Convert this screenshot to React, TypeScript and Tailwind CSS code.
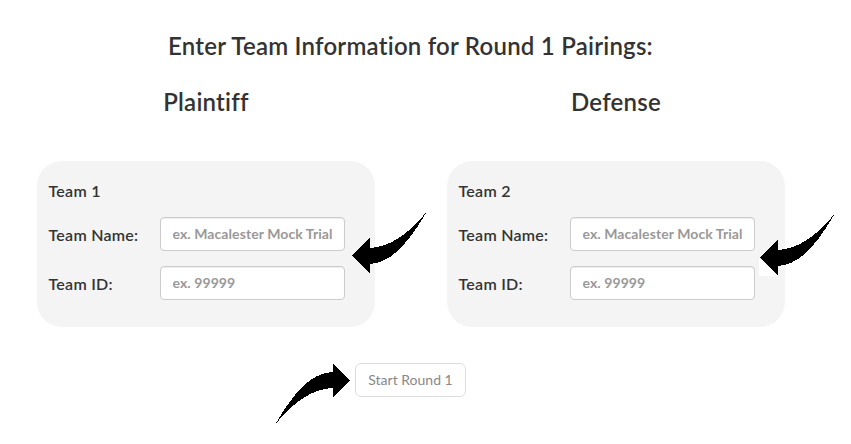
import React from "react";

const ARROW_PATH =
  "M0 43.5 L17.5 26 V36 C36 35 54 25 74.5 0 C56 32 39 51 17.5 52 V61 Z";

function Arrow({ className }: { className: string }) {
  return (
    <svg
      className={`absolute ${className}`}
      width="75"
      height="62"
      viewBox="0 0 75 62"
      shapeRendering="crispEdges"
      aria-hidden="true"
    >
      <path d={ARROW_PATH} fill="#000" />
    </svg>
  );
}

function Field({ label, placeholder }: { label: string; placeholder: string }) {
  return (
    <label className="flex h-[34px] items-center">
      <span className="w-[111.5px] shrink-0 pt-px text-[16px] leading-[22px] font-semibold tracking-[0.25px]">{label}</span>
      <input
        type="text"
        placeholder={placeholder}
        className="h-[34px] w-[185px] rounded-[4px] border border-[#ccc] bg-white pt-[5px] pr-3 pb-[7px] pl-[11.5px] text-[14px] leading-5 font-bold tracking-[0.08px] shadow-[inset_0_1px_1px_rgba(0,0,0,0.075)] placeholder:text-[#999]"
      />
    </label>
  );
}

function Team({ side, number }: { side: string; number: number }) {
  return (
    <section className="flex w-[410px] flex-col items-center">
      <h3 className="text-[24px] leading-[26px] font-semibold tracking-[0.23px]">{side}</h3>
      <div className="mt-[46px] h-[166px] w-[338px] rounded-[25px] bg-[#f4f4f4] pt-[19px] pl-[11.5px]">
        <h4 className="text-[16px] leading-[22px] font-semibold tracking-[0.25px]">Team {number}</h4>
        <div className="mt-[15px] flex flex-col gap-[15px]">
          <Field label="Team Name:" placeholder="ex. Macalester Mock Trial" />
          <Field label="Team ID:" placeholder="ex. 99999" />
        </div>
      </div>
    </section>
  );
}

export default function App() {
  return (
    <main className="relative h-[444px] w-[851px] overflow-hidden bg-white font-['Lato',sans-serif] text-[#333]">
      <div className="flex w-[821px] flex-col items-center pt-[33px]">
        <h2 className="text-[24px] leading-[26px] font-semibold tracking-[0.23px]">
          Enter Team Information for Round 1 Pairings:
        </h2>
        <div className="mt-[30px] ml-px flex w-[820px] self-start">
          <Team side="Plaintiff" number={1} />
          <Team side="Defense" number={2} />
        </div>
        <button className="mt-9 h-[34px] w-[111px] rounded-[6px] border border-[#ddd] bg-white text-[14px] leading-5 text-[#888]">
          Start Round 1
        </button>
      </div>
      <Arrow className="top-[212px] left-[352px]" />
      <div className="absolute top-[258px] left-[759px] h-[18px] w-[18px] bg-white [clip-path:polygon(0_0,100%_95%,100%_100%,0_100%)]" />
      <Arrow className="top-[214px] left-[760px]" />
      <Arrow className="top-[362px] left-[275px] rotate-180" />
    </main>
  );
}
